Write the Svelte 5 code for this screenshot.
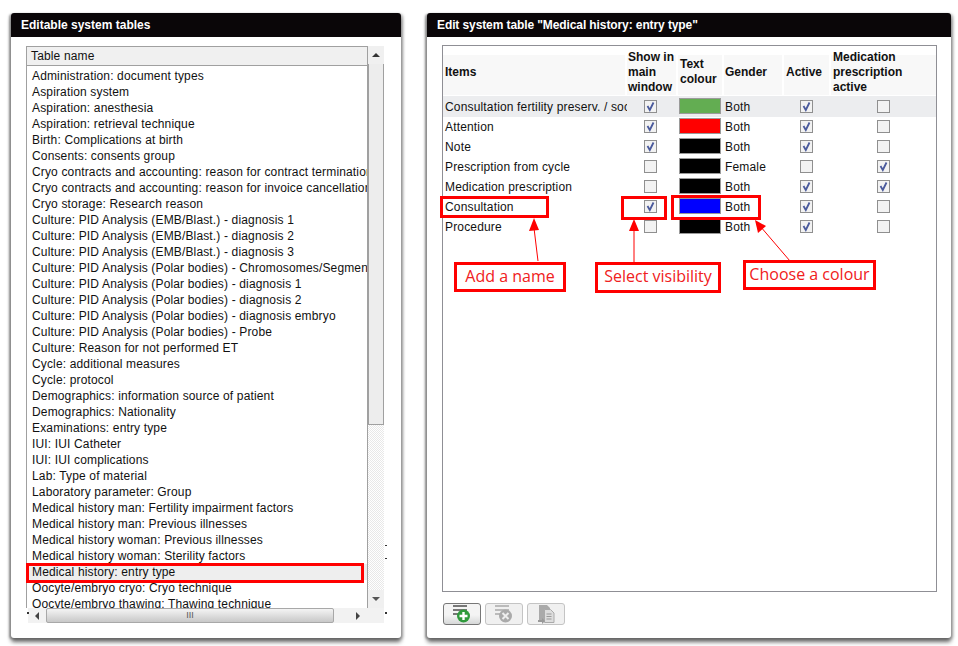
<script>
  const tables = ["Administration: document types","Aspiration system","Aspiration: anesthesia","Aspiration: retrieval technique","Birth: Complications at birth","Consents: consents group","Cryo contracts and accounting: reason for contract termination","Cryo contracts and accounting: reason for invoice cancellation","Cryo storage: Research reason","Culture: PID Analysis (EMB/Blast.) - diagnosis 1","Culture: PID Analysis (EMB/Blast.) - diagnosis 2","Culture: PID Analysis (EMB/Blast.) - diagnosis 3","Culture: PID Analysis (Polar bodies) - Chromosomes/Segments","Culture: PID Analysis (Polar bodies) - diagnosis 1","Culture: PID Analysis (Polar bodies) - diagnosis 2","Culture: PID Analysis (Polar bodies) - diagnosis embryo","Culture: PID Analysis (Polar bodies) - Probe","Culture: Reason for not performed ET","Cycle: additional measures","Cycle: protocol","Demographics: information source of patient","Demographics: Nationality","Examinations: entry type","IUI: IUI Catheter","IUI: IUI complications","Lab: Type of material","Laboratory parameter: Group","Medical history man: Fertility impairment factors","Medical history man: Previous illnesses","Medical history woman: Previous illnesses","Medical history woman: Sterility factors","Medical history: entry type","Oocyte/embryo cryo: Cryo technique","Oocyte/embryo thawing: Thawing technique"];
  const rows = [
    {n:"Consultation fertility preserv. / social freezing",s:true,c:"#63ad52",g:"Both",a:true,m:false},
    {n:"Attention",s:true,c:"#ff0000",g:"Both",a:true,m:false},
    {n:"Note",s:true,c:"#000000",g:"Both",a:true,m:false},
    {n:"Prescription from cycle",s:false,c:"#000000",g:"Female",a:false,m:true},
    {n:"Medication prescription",s:false,c:"#000000",g:"Both",a:true,m:true},
    {n:"Consultation",s:true,c:"#0000ff",g:"Both",a:true,m:false},
    {n:"Procedure",s:false,c:"#000000",g:"Both",a:true,m:false}
  ];
</script>

{#snippet check(on)}
  <svg class="cb" width="13" height="13" viewBox="0 0 13 13">
    <rect x="0.5" y="0.5" width="12" height="12" fill="#f2f2f2" stroke="#8f8f8f"/>
    {#if on}<path d="M3.500 6 L5.800 10 L9.500 2.500" fill="none" stroke="#4a5a9c" stroke-width="1.800"/>{/if}
  </svg>
{/snippet}

<div class="page">
  <section class="panel left">
    <h2>Editable system tables</h2>
    <div class="listwrap">
      <div class="listmain">
        <div class="listbox">
          <div class="lhead">Table name</div>
          <div class="lbody">
            {#each tables as t, i}
              <div class="lrow" class:sel={i === 31}>{t}</div>
            {/each}
          </div>
        </div>
        <div class="vbar">
          <div class="vbtn"><span class="tri up"></span></div>
          <div class="vthumb"></div>
          <div class="vtrack"></div>
          <div class="vbtn"><span class="tri down"></span></div>
        </div>
      </div>
      <div class="hbar">
        <div class="hbtn"><span class="tri lft"></span></div>
        <div class="hthumb">III</div>
        <div class="hspace"></div>
        <div class="hbtn"><span class="tri rgt"></span></div>
        <div class="hcorner"></div>
      </div>
      <div class="redsel"></div>
    </div>
  </section>

  <section class="panel right">
    <h2 class="tight">Edit system table "Medical history: entry type"</h2>
    <div class="tablebox">
      <div class="thead">
        <div class="c1 th">Items</div>
        <div class="c2 th">Show in main window</div>
        <div class="c3 th">Text colour</div>
        <div class="c4 th">Gender</div>
        <div class="c5 th">Active</div>
        <div class="c6 th">Medication prescription active</div>
      </div>
      {#each rows as r, i}
        <div class="trow" class:first={i === 0}>
          <div class="c1 name">{r.n}</div>
          <div class="c2 mid">{@render check(r.s)}</div>
          <div class="c3 swatchcell"><span class="swatch" style="background:{r.c}"></span></div>
          <div class="c4 gender">{r.g}</div>
          <div class="c5 mid">{@render check(r.a)}</div>
          <div class="c6 mid">{@render check(r.m)}</div>
        </div>
      {/each}
    </div>
    <div class="tools">
      <button class="tool active" aria-label="Add">
        <svg width="26" height="22" viewBox="0 0 26 22">
          <path d="M4 2h14v2H4zM4 6h14v2H4zM4 10h14v2H4z" fill="#777"/>
          <circle cx="14.500" cy="13" r="6.500" fill="#2f9a3c"/>
          <path d="M14.500 9v8M10.500 13h8" stroke="#fff" stroke-width="2.400"/>
        </svg>
      </button>
      <button class="tool" aria-label="Delete">
        <svg width="26" height="22" viewBox="0 0 26 22">
          <path d="M4 2h14v2H4zM4 6h14v2H4zM4 10h14v2H4z" fill="#bbb"/>
          <circle cx="14.500" cy="13" r="6.500" fill="#aaa"/>
          <path d="M11.500 10l6 6M17.500 10l-6 6" stroke="#eee" stroke-width="2"/>
        </svg>
      </button>
      <button class="tool" aria-label="Copy">
        <svg width="26" height="22" viewBox="0 0 26 22">
          <path d="M6 2h8l3 3v12H6z" fill="#aaa"/>
          <path d="M11.500 6.500h6l3.500 3.500v9.500h-9.500z" fill="#ddd" stroke="#aaa"/>
          <path d="M13.500 11h5M13.500 13.500h5M13.500 16h5" stroke="#999"/>
          <path d="M5 17h4v-2l3 3-3 3v-2H5z" fill="#999"/>
        </svg>
      </button>
    </div>
  </section>

  <svg class="arrows" width="958" height="646" viewBox="0 0 958 646">
    <g fill="none" stroke="#fe0000">
      <path d="M538 261 L534 228"/>
      <path d="M634 262 L634 228"/>
      <path d="M790 261 L760 226"/>
    </g>
    <g fill="#fe0000">
      <path d="M534 218 L529 231 L539 230 Z"/>
      <path d="M634 219 L629 231 L639 231 Z"/>
      <path d="M755 220 L758 233 L766 226 Z"/>
    </g>
    <g fill="none" stroke="#fe0000" stroke-width="3">
      <rect x="441.500" y="197.500" width="106" height="19"/>
      <rect x="622.500" y="197.500" width="43" height="21"/>
      <rect x="672.500" y="196.500" width="87" height="22"/>
    </g>
    <g fill="#333">
      <rect x="27" y="612" width="2" height="2"/>
      <rect x="385" y="612" width="2" height="2"/>
      <rect x="385" y="545" width="2" height="1"/>
      <rect x="385" y="558" width="2" height="1"/>
    </g>
  </svg>
  <div class="note n1">Add a name</div>
  <div class="note n2">Select visibility</div>
  <div class="note n3">Choose a colour</div>
</div>

<style>
  :global(body) { margin: 0; background: #fff; }
  .page {
    position: relative;
    width: 958px;
    height: 646px;
    overflow: hidden;
    display: flex;
    gap: 26px;
    padding: 13px 7px 8px 11px;
    box-sizing: border-box;
    font-family: "Liberation Sans", Arial, sans-serif;
    font-size: 12px;
    color: #111;
  }
  .panel {
    background: #fff;
    border-radius: 3px;
    box-shadow: 0 4px 4px 0 #666, -2px 1px 2px 0 #aaa, 2px 1px 3px 0 #bbb;
    display: flex;
    flex-direction: column;
    box-sizing: border-box;
  }
  .left { width: 390px; }
  .right { width: 524px; }
  h2 {
    margin: 0;
    height: 24px;
    line-height: 24px;
    background: #0a0608;
    color: #fff;
    font-size: 12px;
    font-weight: bold;
    padding-left: 10px;
    border-radius: 3px 3px 0 0;
    flex: none;
  }
  h2.tight { letter-spacing: -0.1px; }
  .listwrap { position: relative; margin: 9px 17px 0 15px; }
  .listmain { display: flex; height: 562px; }
  .listbox {
    width: 342px;
    border: 1px solid #a0a0a0;
    border-bottom: 0;
    box-sizing: border-box;
    display: flex;
    flex-direction: column;
    overflow: hidden;
    letter-spacing: 0.15px;
  }
  .lhead {
    height: 18px;
    line-height: 18px;
    background: #f0f0f0;
    border-bottom: 1px solid #a0a0a0;
    padding-left: 4px;
    flex: none;
    font-size: 12px;
  }
  .lbody { flex: 1; overflow: hidden; padding-top: 2px; }
  .lrow { height: 16px; line-height: 16px; padding-left: 5px; white-space: nowrap; overflow: hidden; }
  .lrow.sel { background: #eee; }
  .vbar {
    width: 16px;
    background: #f4f4f4;
    display: flex;
    flex-direction: column;
  }
  .vbtn {
    height: 18px;
    flex: none;
    display: flex;
    align-items: center;
    justify-content: center;
    background: #f0f0f0;
  }
  .vthumb { height: 361px; flex: none; background: #ededed; border: 1px solid #a0a0a0; border-top: 0; box-sizing: border-box; }
  .vtrack { flex: 1; background: repeating-conic-gradient(#e8e8e8 0 25%, #fff 0 50%) 0 0 / 2px 2px; }
  .tri { display: block; width: 0; height: 0; border: 4px solid transparent; }
  .tri.up { border-bottom-color: #333; border-top-width: 0; }
  .tri.down { border-top-color: #555; border-bottom-width: 0; }
  .tri.lft { border-right-color: #444; border-left-width: 0; }
  .tri.rgt { border-left-color: #444; border-right-width: 0; }
  .hbar {
    height: 15px;
    width: 356px;
    margin-left: 2px;
    background: #f2f2f2;
    display: flex;
    align-items: stretch;
  }
  .hbtn { width: 18px; flex: none; display: flex; align-items: center; justify-content: center; }
  .hthumb {
    width: 288px;
    flex: none;
    border: 1px solid #a8a8a8;
    border-radius: 2px;
    background: linear-gradient(#f4f4f4, #c8c8c8);
    box-sizing: border-box;
    text-align: center;
    font-size: 9px;
    line-height: 12px;
    color: #555;
  }
  .hspace { width: 15px; flex: none; }
  .hcorner { flex: 1; }
  .redsel {
    position: absolute;
    left: 0;
    top: 517px;
    width: 338px;
    height: 20px;
    border: 3px solid #ff0000;
    box-sizing: border-box;
  }
  .tablebox {
    margin: 8px 14px 0 15px;
    height: 547px;
    border: 1px solid #8f8f95;
    box-sizing: border-box;
    flex: none;
  }
  .thead {
    display: flex;
    height: 40px;
    margin-top: 9px;
    background: #f8f8f8;
    margin-bottom: 1px;
  }
  .th {
    font-weight: bold;
    display: flex;
    align-items: center;
    line-height: 15px;
    padding: 0 0 6px 1px;
    box-sizing: border-box;
    border-right: 2px solid #fff;
  }
  .th.c3, .th.c5, .th.c6 { padding-left: 2px; }
  .th.c1 { padding-left: 2px; padding-top: 0; }
  .c1 { width: 184px; flex: none; box-sizing: border-box; }
  .c2 { width: 51px; flex: none; box-sizing: border-box; }
  .c3 { width: 46px; flex: none; box-sizing: border-box; }
  .c4 { width: 60px; flex: none; box-sizing: border-box; }
  .c5 { width: 47px; flex: none; box-sizing: border-box; }
  .c6 { flex: 1; box-sizing: border-box; }
  .th.c6 { border-right: 0; }
  .trow { display: flex; height: 20px; align-items: center; }
  .trow.first { background: #ecedef; box-shadow: 0 1px 0 #ecedef; }
  .name { padding: 1px 12px 0 2px; white-space: nowrap; overflow: hidden; letter-spacing: 0.16px; }
  .mid { display: flex; justify-content: center; align-items: center; }
  .cb { display: block; }
  .c2.mid { padding-right: 5px; }
  .c5.mid { padding-right: 2px; }
  .c6.mid { width: 105px; flex: none; }
  .swatchcell { display: flex; align-items: center; }
  .swatch { display: block; width: 42px; height: 16px; border: 1px solid #9a9a9a; margin-left: 1px; box-sizing: border-box; }
  .gender { padding: 1px 0 0 1px; letter-spacing: 0.16px; }
  .tools { display: flex; gap: 4px; margin: 11px 0 0 16px; }
  .tool {
    width: 38px;
    height: 22px;
    padding: 0;
    border: 1px solid #c4c4c4;
    border-radius: 3px;
    background: #f0f0f0;
    display: flex;
    align-items: center;
    justify-content: center;
    overflow: hidden;
  }
  .tool.active {
    border-color: #777;
    background: linear-gradient(#f4f4f4 55%, #d6d8d8);
  }
  .arrows { position: absolute; left: 0; top: 0; pointer-events: none; }
  .note {
    position: absolute;
    border: 3px solid #ff0000;
    box-sizing: border-box;
    background: #fff;
    color: #f02020;
    font-family: "Open Sans", Verdana, sans-serif;
    font-size: 16px;
    padding-bottom: 3px;
    display: flex;
    align-items: center;
    justify-content: center;
    white-space: nowrap;
  }
  .n1 { left: 454px; top: 262px; width: 112px; height: 30px; }
  .n2 { left: 595px; top: 262px; width: 126px; height: 31px; }
  .n3 { left: 743px; top: 260px; width: 133px; height: 30px; }
</style>
